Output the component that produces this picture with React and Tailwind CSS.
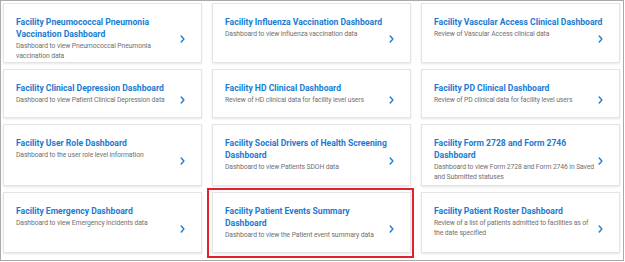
import React from 'react';

// line breaks follow the original screen
const cards = [
  { title: ['Facility Pneumococcal Pneumonia', 'Vaccination Dashboard'], desc: ['Dashboard to view Pneumococcal Pneumonia', 'vaccination data'] },
  { title: ['Facility Influenza Vaccination Dashboard'], desc: ['Dashboard to view influenza vaccination data'] },
  { title: ['Facility Vascular Access Clinical Dashboard'], desc: ['Review of Vascular Access clinical data'] },
  { title: ['Facility Clinical Depression Dashboard'], desc: ['Dashboard to view Patient Clinical Depression data'] },
  { title: ['Facility HD Clinical Dashboard'], desc: ['Review of HD clinical data for facility level users'] },
  { title: ['Facility PD Clinical Dashboard'], desc: ['Review of PD clinical data for facility level users'] },
  { title: ['Facility User Role Dashboard'], desc: ['Dashboard to the user role level information'] },
  { title: ['Facility Social Drivers of Health Screening', 'Dashboard'], desc: ['Dashboard to view Patients SDOH data'] },
  { title: ['Facility Form 2728 and Form 2746', 'Dashboard'], desc: ['Dashboard to view Form 2728 and Form 2746 in Saved', 'and Submitted statuses'] },
  { title: ['Facility Emergency Dashboard'], desc: ['Dashboard to view Emergency Incidents data'] },
  { title: ['Facility Patient Events Summary', 'Dashboard'], desc: ['Dashboard to view the Patient event summary data'], highlighted: true },
  { title: ['Facility Patient Roster Dashboard'], desc: ['Review of a list of patients admitted to facilities as of', 'the date specified'] },
];

const Chevron = () => (
  <svg width="5" height="8" viewBox="0 0 5 8" className="shrink-0">
    <path d="M1.2 1 L3.9 4 L1.2 7" fill="none" stroke="#1a7bd2" strokeWidth="1.4" strokeLinecap="round" strokeLinejoin="round" />
  </svg>
);

const DashboardCard = ({ title, desc, highlighted }) => {
  return (
    <div className="relative">
      {highlighted && (
        <div className="absolute -left-[5px] -right-[3px] -top-[4px] -bottom-[5px] border-2 border-[#e3212b] pointer-events-none" />
      )}
      <div className="h-full bg-white border border-[#e4e4e4] shadow-[0_1px_2px_rgba(0,0,0,0.10)] flex pl-[12px] pr-[16px] pt-[12px]">
        <div className="flex-1 min-w-0">
          <h3 className="text-[8.6px] leading-[12px] font-bold text-[#1a7bd2]">
            {title.map((line) => (
              <span key={line} className="block whitespace-nowrap">{line}</span>
            ))}
          </h3>
          <p className="mt-[2px] text-[6.8px] leading-[9.5px] tracking-[-0.1px] text-[#707070]">
            {desc.map((line) => (
              <span key={line} className="block whitespace-nowrap">{line}</span>
            ))}
          </p>
        </div>
        <div className="w-[8px] flex justify-end items-center">
          <Chevron />
        </div>
      </div>
    </div>
  );
};

const App = () => {
  return (
    <div className="w-[625px] h-[262px] bg-white" style={{ fontFamily: 'Roboto, "Liberation Sans", sans-serif' }}>
      <div className="w-[624px] h-[261px] border border-[#a9a9a9] pl-[2px] pt-[2px]">
        <div className="grid grid-cols-[199px_199px_199px] grid-rows-[60px_49px_62px_61px] gap-x-[10px] gap-y-[6px]">
          {cards.map((c) => (
            <DashboardCard key={c.title[0]} {...c} />
          ))}
        </div>
      </div>
    </div>
  );
};

export default App;
